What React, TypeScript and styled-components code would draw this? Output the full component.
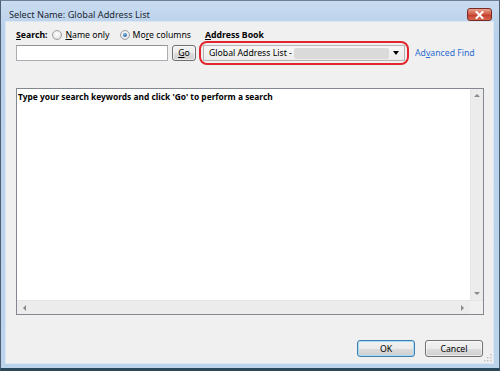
import React from 'react'
import styled, { createGlobalStyle } from 'styled-components'

const GlobalStyle = createGlobalStyle`
  html, body {
    margin: 0;
    padding: 0;
    background: #ffffff;
  }
  body {
    font-family: "Noto Sans", "Open Sans", "DejaVu Sans", sans-serif;
    font-size: 8.7px;
    color: #000000;
  }
`

const Window = styled.div`
  width: 500px;
  height: 371px;
  box-sizing: border-box;
  display: flex;
  flex-direction: column;
  background: linear-gradient(#c8dbf0, #b9d1ea 30px, #bcd3ec);
  border-top: 1px solid #6f7f92;
  border-left: 1px solid #4f5f72;
  border-right: 1px solid #4f5f72;
  border-bottom: 3px solid #2a4a5c;
  padding: 0 6px 5px 5px;
`

const TitleBar = styled.div`
  height: 21px;
  flex: none;
  display: flex;
  justify-content: space-between;
  align-items: flex-start;
`

const Title = styled.span`
  padding: 8px 0 0 3px;
  font-size: 9.2px;
  line-height: 12px;
  color: #1b2733;
`

const CloseButton = styled.div`
  width: 25px;
  height: 13px;
  margin-top: 7px;
  margin-right: 1px;
  box-sizing: border-box;
  border: 1px solid #7a2a22;
  border-radius: 3px;
  background: linear-gradient(#e8a493, #d0553d 50%, #c0392a 51%, #d86a52);
  display: flex;
  align-items: center;
  justify-content: center;
`

const Client = styled.div`
  position: relative;
  flex: 1;
  display: flex;
  flex-direction: column;
  background: #f0f0f0;
  box-shadow: 0 0 0 1px #dbe7f4;
  padding: 7px 9px 0 10px;
`

const TopArea = styled.div`
  display: flex;
  align-items: flex-start;
`

const Column = styled.div<{ $width?: number; $gap?: number; $left?: number }>`
  display: flex;
  flex-direction: column;
  gap: ${p => p.$gap ?? 0}px;
  width: ${p => (p.$width ? `${p.$width}px` : 'auto')};
  margin-left: ${p => p.$left ?? 0}px;
  flex: none;
`

const Row = styled.div<{ $gap?: number }>`
  display: flex;
  align-items: center;
  gap: ${p => p.$gap ?? 0}px;
`

const Label = styled.span<{ $bold?: boolean; $indent?: number }>`
  font-weight: ${p => (p.$bold ? 700 : 400)};
  line-height: 12px;
  white-space: nowrap;
  padding-left: ${p => p.$indent ?? 0}px;
`

const Key = styled.span`
  text-decoration: underline;
`

const RadioItem = styled.label<{ $left?: number }>`
  display: flex;
  align-items: center;
  gap: 3px;
  line-height: 12px;
  white-space: nowrap;
  margin-left: ${p => p.$left ?? 0}px;
`

const RadioCircle = styled.span<{ $checked?: boolean }>`
  width: 10px;
  height: 10px;
  box-sizing: border-box;
  border-radius: 50%;
  border: 1px solid #9a9fa4;
  background: radial-gradient(circle at 50% 40%, #ffffff, #dcdcdc);
  display: flex;
  align-items: center;
  justify-content: center;
  &::after {
    content: '';
    width: 4px;
    height: 4px;
    border-radius: 50%;
    background: radial-gradient(circle at 40% 35%, #6fb3e8, #1b4f8a);
    display: ${p => (p.$checked ? 'block' : 'none')};
  }
`

const TextInput = styled.div`
  width: 152px;
  height: 16px;
  box-sizing: border-box;
  background: #ffffff;
  border: 1px solid #abadb3;
  border-top-color: #8e9296;
`

const Button = styled.div<{ $width: number; $height: number; $default?: boolean }>`
  width: ${p => p.$width}px;
  height: ${p => p.$height}px;
  box-sizing: border-box;
  border: 1px solid ${p => (p.$default ? '#3c7fb1' : '#707070')};
  border-radius: 3px;
  background: linear-gradient(#f2f2f2, #ebebeb 50%, #dddddd 51%, #cfcfcf);
  box-shadow: inset 0 0 0 1px ${p => (p.$default ? '#a6dcf5' : 'rgba(255,255,255,0.6)')};
  display: flex;
  align-items: center;
  justify-content: center;
  line-height: 12px;
`

const Ring = styled.div`
  width: 210px;
  height: 24px;
  box-sizing: border-box;
  border: 2px solid #e3262e;
  border-radius: 8px;
  padding: 2px;
`

const Combo = styled.div`
  height: 16px;
  box-sizing: border-box;
  border: 1px solid #b4b4b4;
  background: linear-gradient(#f7f7f7, #ececec);
  display: flex;
  align-items: center;
  padding: 0 5px;
  gap: 2px;
  line-height: 12px;
  white-space: nowrap;
`

const Blur = styled.span`
  flex: none;
  width: 95px;
  height: 11px;
  background: #dadada;
  border-radius: 2px;
  filter: blur(0.6px);
`

const ComboArrow = styled.span`
  margin-left: auto;
  width: 0;
  height: 0;
  border-left: 3.5px solid transparent;
  border-right: 3.5px solid transparent;
  border-top: 4px solid #000000;
`

const LinkText = styled.span`
  margin: 12px 0 0 6px;
  line-height: 24px;
  color: #2e6ccf;
  white-space: nowrap;
`

const ResultList = styled.div`
  margin-top: 23px;
  height: 227px;
  box-sizing: border-box;
  border: 1px solid #828790;
  background: #ffffff;
  display: flex;
  flex-direction: column;
`

const ListBody = styled.div`
  flex: 1;
  display: flex;
`

const ListContent = styled.div`
  flex: 1;
  padding: 2px 0 0 1px;
  font-size: 8.4px;
  font-weight: 700;
  line-height: 12px;
`

const VScroll = styled.div`
  width: 12px;
  background: #ececec;
  border-left: 1px solid #e6e6e6;
  display: flex;
  flex-direction: column;
  justify-content: space-between;
  align-items: center;
  padding: 5px 0;
`

const HScrollRow = styled.div`
  height: 13px;
  display: flex;
  background: #ececec;
  border-top: 1px solid #e4e4e4;
`

const HScroll = styled.div`
  flex: 1;
  display: flex;
  justify-content: space-between;
  align-items: center;
  padding: 0 6px;
`

const Corner = styled.div`
  width: 13px;
  background: #f0f0f0;
`

const Arrow = styled.span<{ $dir: 'up' | 'down' | 'left' | 'right' }>`
  width: 0;
  height: 0;
  border: 3px solid transparent;
  ${p =>
    p.$dir === 'up'
      ? 'border-bottom: 3px solid #8a8a8a; border-top-width: 0;'
      : p.$dir === 'down'
      ? 'border-top: 3px solid #8a8a8a; border-bottom-width: 0;'
      : p.$dir === 'left'
      ? 'border-right: 3px solid #8a8a8a; border-left-width: 0;'
      : 'border-left: 3px solid #8a8a8a; border-right-width: 0;'}
`

const ButtonRow = styled.div`
  margin-top: 25px;
  display: flex;
  justify-content: flex-end;
  gap: 10px;
  padding-right: 1px;
`

const SizeGrip = styled.svg`
  position: absolute;
  right: 1px;
  bottom: 1px;
`

const App = (): React.ReactElement => {
  return (
    <>
      <GlobalStyle />
      <Window>
        <TitleBar>
          <Title>Select Name: Global Address List</Title>
          <CloseButton>
            <svg width="9" height="8" viewBox="0 0 9 8">
              <path d="M1.5 1 L7.5 7 M7.5 1 L1.5 7" stroke="#ffffff" strokeWidth="2" strokeLinecap="square" />
            </svg>
          </CloseButton>
        </TitleBar>
        <Client>
          <TopArea>
            <Column $width={180} $gap={4}>
              <Row $gap={5}>
                <Label $bold>
                  <Key>S</Key>earch:
                </Label>
                <RadioItem>
                  <RadioCircle />
                  <span>
                    <Key>N</Key>ame only
                  </span>
                </RadioItem>
                <RadioItem $left={5}>
                  <RadioCircle $checked />
                  <span>
                    Mo<Key>r</Key>e columns
                  </span>
                </RadioItem>
              </Row>
              <Row $gap={4}>
                <TextInput />
                <Button $width={24} $height={16}>
                  <Key>G</Key>o
                </Button>
              </Row>
            </Column>
            <Column $left={3}>
              <Label $bold $indent={6}>
                <Key>A</Key>ddress Book
              </Label>
              <Ring>
                <Combo>
                  <span>Global Address List -</span>
                  <Blur />
                  <ComboArrow />
                </Combo>
              </Ring>
            </Column>
            <LinkText>
              Ad<Key>v</Key>anced Find
            </LinkText>
          </TopArea>
          <ResultList>
            <ListBody>
              <ListContent>Type your search keywords and click 'Go' to perform a search</ListContent>
              <VScroll>
                <Arrow $dir="up" />
                <Arrow $dir="down" />
              </VScroll>
            </ListBody>
            <HScrollRow>
              <HScroll>
                <Arrow $dir="left" />
                <Arrow $dir="right" />
              </HScroll>
              <Corner />
            </HScrollRow>
          </ResultList>
          <ButtonRow>
            <Button $width={58} $height={17} $default>
              OK
            </Button>
            <Button $width={58} $height={17}>
              Cancel
            </Button>
          </ButtonRow>
          <SizeGrip width="8" height="8" viewBox="0 0 8 8">
            <rect x="6" y="0" width="1.5" height="1.5" fill="#c2c2c2" />
            <rect x="3" y="3" width="1.5" height="1.5" fill="#c2c2c2" />
            <rect x="6" y="3" width="1.5" height="1.5" fill="#c2c2c2" />
            <rect x="0" y="6" width="1.5" height="1.5" fill="#c2c2c2" />
            <rect x="3" y="6" width="1.5" height="1.5" fill="#c2c2c2" />
            <rect x="6" y="6" width="1.5" height="1.5" fill="#c2c2c2" />
          </SizeGrip>
        </Client>
      </Window>
    </>
  )
}

export default App
